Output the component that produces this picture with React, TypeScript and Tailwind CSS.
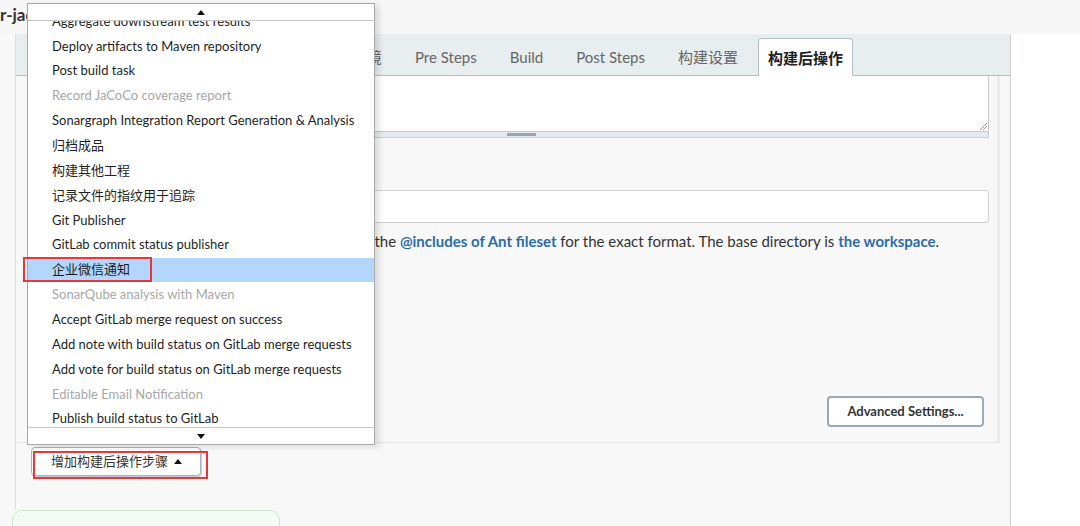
import React from "react";

const FONT = "font-['Lato','Noto_Sans_CJK_SC',sans-serif]";

type Item = { label: string; disabled?: boolean; active?: boolean };

const ITEMS: Item[] = [
  { label: "Aggregate downstream test results" },
  { label: "Deploy artifacts to Maven repository" },
  { label: "Post build task" },
  { label: "Record JaCoCo coverage report", disabled: true },
  { label: "Sonargraph Integration Report Generation & Analysis" },
  { label: "归档成品" },
  { label: "构建其他工程" },
  { label: "记录文件的指纹用于追踪" },
  { label: "Git Publisher" },
  { label: "GitLab commit status publisher" },
  { label: "企业微信通知", active: true },
  { label: "SonarQube analysis with Maven", disabled: true },
  { label: "Accept GitLab merge request on success" },
  { label: "Add note with build status on GitLab merge requests" },
  { label: "Add vote for build status on GitLab merge requests" },
  { label: "Editable Email Notification", disabled: true },
  { label: "Publish build status to GitLab" },
  { label: "Publish JUnit test result report" },
];

const TABS = ["Pre Steps", "Build", "Post Steps", "构建设置"];

function Caret({ up }: { up?: boolean }) {
  return (
    <svg width="8" height="5" viewBox="0 0 8 5" className="block">
      {up ? <polygon points="0,5 8,5 4,0" fill="#111" /> : <polygon points="0,0 8,0 4,5" fill="#111" />}
    </svg>
  );
}

function StepMenu() {
  return (
    <div className="absolute left-[27px] top-[3px] w-[348px] h-[442px] flex flex-col bg-white border border-[#a9a9a9] shadow-[4px_2px_6px_rgba(0,0,0,0.12)]">
      <div className="h-[17px] flex items-center justify-center border-b border-[#c8c8c8] shrink-0">
        <Caret up />
      </div>
      <div className="flex-1 overflow-hidden">
        <ul className="mt-[-12px]">
          {ITEMS.map((item) => (
            <li
              key={item.label}
              className={`h-[24.87px] flex items-center pl-[24px] text-[13px] whitespace-nowrap ${
                item.active ? "bg-[#b3d6fd] text-[#1a1a1a]" : item.disabled ? "text-[#a8a8a8]" : "text-[#1f1f1f]"
              }`}
            >
              {item.label}
            </li>
          ))}
        </ul>
      </div>
      <div className="h-[17px] flex items-center justify-center border-t border-[#c8c8c8] shrink-0">
        <Caret />
      </div>
    </div>
  );
}

export default function App() {
  return (
    <div className={`relative min-h-screen bg-[#f8f8f8] overflow-hidden ${FONT}`}>
      {/* Header */}
      <div className="h-[34px] bg-[#f7f7f7] flex items-center">
        <span className="text-[17px] font-bold text-[#333] whitespace-nowrap -mt-[4px]">r-jacoco-demo</span>
      </div>

      <div className="flex">
        {/* Left column: config form */}
        <div className="w-[1011px] shrink-0 border-r border-[#cfcfcf] bg-[#f8f8f8]">
          <div className="ml-[15px] border-l border-[#dcdcdc] h-[476px]">
            {/* Tabs */}
            <div className="h-[42px] bg-[#e8edf0] border-b border-[#b5c0c8] flex items-end">
              <div className="w-[388px] shrink-0 overflow-hidden flex justify-end pr-[11px] pt-[5px] self-stretch items-center">
                <span className="px-[11px] text-[15px] text-[#666] whitespace-nowrap">构建环境</span>
              </div>
              <div className="flex items-center gap-[11px] pt-[5px] self-stretch">
                {TABS.map((t) => (
                  <span key={t} className="px-[11px] text-[15px] text-[#666] whitespace-nowrap">{t}</span>
                ))}
              </div>
              <div className="ml-[9px] h-[38px] px-[9px] pt-[2px] flex items-center bg-white border border-b-0 border-[#b5c0c8] rounded-t-[4px] text-[15px] font-bold text-[#222] -mb-px">
                构建后操作
              </div>
            </div>

            {/* Section */}
            <div className="mr-[10px] border-r-[3px] border-b border-r-[#ececec] border-b-[#e2e2e2] h-[367px] pl-[37px] pr-[8px] flex flex-col">
              <div className="h-[56px] bg-white border border-t-0 border-[#c8c8c8] relative">
                <svg width="8" height="8" viewBox="0 0 8 8" className="absolute right-[1px] bottom-[1px]">
                  <line x1="1" y1="8" x2="8" y2="1" stroke="#9a9a9a" strokeWidth="1" />
                  <line x1="4" y1="8" x2="8" y2="4" stroke="#9a9a9a" strokeWidth="1" />
                </svg>
              </div>
              <div className="h-[6px] bg-[#e6ebee] border border-t-0 border-[#c4cdd3] flex justify-center">
                <div className="w-[29px] h-[3px] mt-[1px] bg-[#9aa3a8]" />
              </div>

              <div className="mt-[52px] h-[33px] bg-white border border-[#d0d0d0] rounded-[3px]" />
              <p className="mt-[7px] text-[15px] text-[#333] whitespace-nowrap">
                Can use wildcards like 'module/dist/**/*.zip'. See the{" "}
                <span className="font-bold text-[#2e6ca8]">@includes of Ant fileset</span> for the exact format. The base
                directory is <span className="font-bold text-[#2e6ca8]">the workspace</span>.
              </p>

              <div className="mt-auto mb-[15px] flex justify-end pr-[5px]">
                <button className="h-[31px] w-[157px] bg-white border-2 border-[#9da9b2] rounded-[4px] text-[13px] font-bold text-[#333]">
                  Advanced Settings...
                </button>
              </div>
            </div>

            {/* Add step */}
            <div className="pt-[4px] pl-[15px]">
              <button className="h-[29px] pl-[19px] pr-[18px] flex items-center gap-[6px] bg-white border border-[#a9b3ba] rounded-[4px] shadow-[1px_1px_0_#c5ccd1] text-[13px] text-[#333]">
                增加构建后操作步骤
                <Caret up />
              </button>
            </div>
          </div>
          <div className="ml-[12px] w-[268px] h-[40px] border border-[#cfe3cf] rounded-t-[10px] bg-[#f4faf4]" />
        </div>
        <div className="flex-1 bg-white" />
      </div>

      {/* Dropdown menu overlay */}
      <StepMenu />

      {/* Annotation boxes */}
      <div className="absolute left-[23px] top-[257px] w-[129px] h-[25px] border-2 border-[#e8363a]" />
      <div className="absolute left-[33px] top-[451px] w-[175px] h-[28px] border-2 border-[#e8363a]" />
    </div>
  );
}
